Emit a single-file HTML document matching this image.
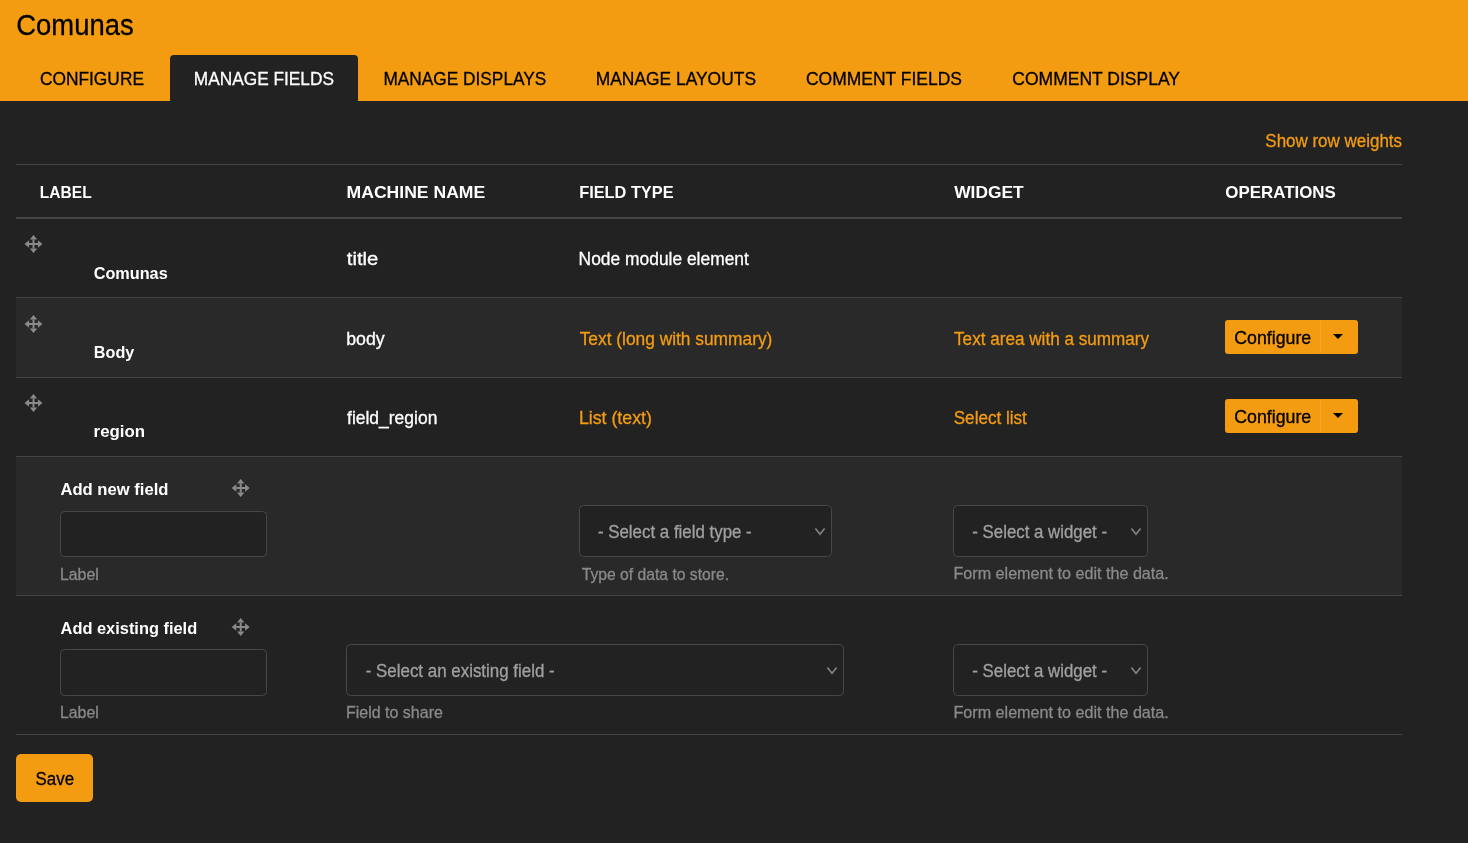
<!DOCTYPE html>
<html><head><meta charset="utf-8"><style>
html,body{margin:0;padding:0;background:#222222;width:1468px;height:843px;overflow:hidden}
svg{display:block;will-change:transform;font-family:"Liberation Sans",sans-serif}
</style></head><body>
<svg width="1468" height="843" viewBox="0 0 1468 843">

<rect width="1468" height="843" fill="#222222"/>
<rect x="0" y="0" width="1468" height="101" fill="#F39C12"/>
<path d="M170 101 V59 a4 4 0 0 1 4 -4 H354 a4 4 0 0 1 4 4 V101 Z" fill="#222222"/>
<rect x="16" y="298" width="1386" height="79" fill="#292929"/>
<rect x="16" y="457" width="1386" height="138" fill="#292929"/>
<rect x="16" y="164" width="1386" height="1" fill="#444444"/>
<rect x="16" y="217" width="1386" height="2" fill="#444444"/>
<rect x="16" y="297" width="1386" height="1" fill="#444444"/>
<rect x="16" y="377" width="1386" height="1" fill="#444444"/>
<rect x="16" y="456" width="1386" height="1" fill="#444444"/>
<rect x="16" y="595" width="1386" height="1" fill="#444444"/>
<rect x="16" y="734" width="1386" height="1" fill="#444444"/>
<g transform="translate(24.5 235.0)" fill="#8a8a8a"><path d="M9 0 L12.7 4.6 H5.3 Z M9 18 L12.7 13.4 H5.3 Z M0 9 L4.6 5.3 V12.7 Z M18 9 L13.4 5.3 V12.7 Z"/><rect x="8" y="4.5" width="2" height="9"/><rect x="4.5" y="8" width="9" height="2"/></g>
<g transform="translate(24.5 315.0)" fill="#8a8a8a"><path d="M9 0 L12.7 4.6 H5.3 Z M9 18 L12.7 13.4 H5.3 Z M0 9 L4.6 5.3 V12.7 Z M18 9 L13.4 5.3 V12.7 Z"/><rect x="8" y="4.5" width="2" height="9"/><rect x="4.5" y="8" width="9" height="2"/></g>
<g transform="translate(24.5 394.0)" fill="#8a8a8a"><path d="M9 0 L12.7 4.6 H5.3 Z M9 18 L12.7 13.4 H5.3 Z M0 9 L4.6 5.3 V12.7 Z M18 9 L13.4 5.3 V12.7 Z"/><rect x="8" y="4.5" width="2" height="9"/><rect x="4.5" y="8" width="9" height="2"/></g>
<g transform="translate(231.7 479.0)" fill="#8a8a8a"><path d="M9 0 L12.7 4.6 H5.3 Z M9 18 L12.7 13.4 H5.3 Z M0 9 L4.6 5.3 V12.7 Z M18 9 L13.4 5.3 V12.7 Z"/><rect x="8" y="4.5" width="2" height="9"/><rect x="4.5" y="8" width="9" height="2"/></g>
<g transform="translate(231.7 618.0)" fill="#8a8a8a"><path d="M9 0 L12.7 4.6 H5.3 Z M9 18 L12.7 13.4 H5.3 Z M0 9 L4.6 5.3 V12.7 Z M18 9 L13.4 5.3 V12.7 Z"/><rect x="8" y="4.5" width="2" height="9"/><rect x="4.5" y="8" width="9" height="2"/></g>
<rect x="1225" y="320" width="133" height="34" fill="#F39C12" rx="3"/>
<rect x="1320" y="321" width="1" height="32" fill="#f5a82e"/>
<path d="M1333 334 h10 l-5 5 z" fill="#000"/>
<rect x="1225" y="399" width="133" height="34" fill="#F39C12" rx="3"/>
<rect x="1320" y="400" width="1" height="32" fill="#f5a82e"/>
<path d="M1333 413 h10 l-5 5 z" fill="#000"/>
<rect x="60.5" y="511.5" width="206" height="45" fill="#222222" rx="4" stroke="#474747" stroke-width="1"/>
<rect x="60.5" y="649.5" width="206" height="46" fill="#222222" rx="4" stroke="#474747" stroke-width="1"/>
<rect x="579.5" y="505.5" width="252" height="51" fill="#222222" rx="4" stroke="#474747" stroke-width="1"/>
<path d="M815.4 528.6 l4.6 5.6 l4.6 -5.6" fill="none" stroke="#858585" stroke-width="1.6"/>
<rect x="953.5" y="505.5" width="194" height="51" fill="#222222" rx="4" stroke="#474747" stroke-width="1"/>
<path d="M1131.4 528.6 l4.6 5.6 l4.6 -5.6" fill="none" stroke="#858585" stroke-width="1.6"/>
<rect x="346.5" y="644.5" width="497" height="51" fill="#222222" rx="4" stroke="#474747" stroke-width="1"/>
<path d="M827.4 667.6 l4.6 5.6 l4.6 -5.6" fill="none" stroke="#858585" stroke-width="1.6"/>
<rect x="953.5" y="644.5" width="194" height="51" fill="#222222" rx="4" stroke="#474747" stroke-width="1"/>
<path d="M1131.4 667.6 l4.6 5.6 l4.6 -5.6" fill="none" stroke="#858585" stroke-width="1.6"/>
<rect x="16" y="754" width="77" height="48" fill="#F39C12" rx="5"/>
<text transform="translate(16.23 34.70) scale(0.9045 1)" font-size="30.38" letter-spacing="0.000" fill="#000000" stroke="#000000" stroke-width="0.3">Comunas</text>
<text transform="translate(39.93 84.60) scale(0.9474 1)" font-size="18.31" letter-spacing="0.000" fill="#000000" stroke="#000000" stroke-width="0.3">CONFIGURE</text>
<text transform="translate(193.82 84.60) scale(0.9437 1)" font-size="18.31" letter-spacing="0.000" fill="#ffffff" stroke="#ffffff" stroke-width="0.3">MANAGE FIELDS</text>
<text transform="translate(383.42 84.60) scale(0.9435 1)" font-size="18.31" letter-spacing="0.000" fill="#000000" stroke="#000000" stroke-width="0.3">MANAGE DISPLAYS</text>
<text transform="translate(595.71 84.60) scale(0.9516 1)" font-size="18.31" letter-spacing="0.000" fill="#000000" stroke="#000000" stroke-width="0.3">MANAGE LAYOUTS</text>
<text transform="translate(805.93 84.60) scale(0.9555 1)" font-size="18.31" letter-spacing="0.000" fill="#000000" stroke="#000000" stroke-width="0.3">COMMENT FIELDS</text>
<text transform="translate(1012.32 84.60) scale(0.9572 1)" font-size="18.31" letter-spacing="0.000" fill="#000000" stroke="#000000" stroke-width="0.3">COMMENT DISPLAY</text>
<text transform="translate(1265.32 146.90) scale(0.9661 1)" font-size="17.58" letter-spacing="0.000" fill="#F39C12" stroke="#F39C12" stroke-width="0.3">Show row weights</text>
<text transform="translate(39.86 198.00) scale(0.9089 1)" font-size="17.15" letter-spacing="0.000" fill="#ffffff" font-weight="bold">LABEL</text>
<text transform="translate(346.54 198.00) scale(1.0259 1)" font-size="17.15" letter-spacing="0.000" fill="#ffffff" font-weight="bold">MACHINE NAME</text>
<text transform="translate(579.22 198.00) scale(0.9524 1)" font-size="17.15" letter-spacing="0.000" fill="#ffffff" font-weight="bold">FIELD TYPE</text>
<text transform="translate(954.20 198.00) scale(1.0134 1)" font-size="17.15" letter-spacing="0.000" fill="#ffffff" font-weight="bold">WIDGET</text>
<text transform="translate(1225.32 197.90) scale(0.9864 1)" font-size="17.15" letter-spacing="0.000" fill="#ffffff" font-weight="bold">OPERATIONS</text>
<text transform="translate(93.65 278.80) scale(0.9559 1)" font-size="17.02" letter-spacing="0.000" fill="#ffffff" font-weight="bold">Comunas</text>
<text transform="translate(346.80 265.00) scale(1.1526 1)" font-size="17.58" letter-spacing="-0.000" fill="#ffffff" stroke="#ffffff" stroke-width="0.3">title</text>
<text transform="translate(578.61 265.00) scale(0.9904 1)" font-size="17.58" letter-spacing="0.000" fill="#ffffff" stroke="#ffffff" stroke-width="0.3">Node module element</text>
<text transform="translate(93.83 357.70) scale(0.9519 1)" font-size="17.02" letter-spacing="0.000" fill="#ffffff" font-weight="bold">Body</text>
<text transform="translate(346.13 344.80) scale(1.0116 1)" font-size="17.58" letter-spacing="0.000" fill="#ffffff" stroke="#ffffff" stroke-width="0.3">body</text>
<text transform="translate(579.65 345.00) scale(0.9870 1)" font-size="17.58" letter-spacing="0.000" fill="#F39C12" stroke="#F39C12" stroke-width="0.3">Text (long with summary)</text>
<text transform="translate(954.06 344.80) scale(0.9742 1)" font-size="17.58" letter-spacing="0.000" fill="#F39C12" stroke="#F39C12" stroke-width="0.3">Text area with a summary</text>
<text transform="translate(1234.21 343.70) scale(1.0105 1)" font-size="17.58" letter-spacing="0.000" fill="#000000" stroke="#000000" stroke-width="0.3">Configure</text>
<text transform="translate(93.59 437.20) scale(0.9888 1)" font-size="17.02" letter-spacing="0.000" fill="#ffffff" font-weight="bold">region</text>
<text transform="translate(347.03 423.70) scale(0.9951 1)" font-size="17.58" letter-spacing="0.000" fill="#ffffff" stroke="#ffffff" stroke-width="0.3">field_region</text>
<text transform="translate(578.88 423.70) scale(1.0107 1)" font-size="17.58" letter-spacing="0.000" fill="#F39C12" stroke="#F39C12" stroke-width="0.3">List (text)</text>
<text transform="translate(953.72 423.90) scale(0.9736 1)" font-size="17.58" letter-spacing="0.000" fill="#F39C12" stroke="#F39C12" stroke-width="0.3">Select list</text>
<text transform="translate(1234.21 422.70) scale(1.0105 1)" font-size="17.58" letter-spacing="0.000" fill="#000000" stroke="#000000" stroke-width="0.3">Configure</text>
<text transform="translate(60.47 495.00) scale(0.9764 1)" font-size="17.02" letter-spacing="0.000" fill="#ffffff" font-weight="bold">Add new field</text>
<text transform="translate(597.92 538.00) scale(0.9609 1)" font-size="17.58" letter-spacing="0.000" fill="#a0a0a0" stroke="#a0a0a0" stroke-width="0.3">- Select a field type -</text>
<text transform="translate(972.33 537.60) scale(0.9580 1)" font-size="17.58" letter-spacing="0.000" fill="#a0a0a0" stroke="#a0a0a0" stroke-width="0.3">- Select a widget -</text>
<text transform="translate(59.93 579.70) scale(0.9253 1)" font-size="17.16" letter-spacing="0.000" fill="#8a8a8a" stroke="#8a8a8a" stroke-width="0.3">Label</text>
<text transform="translate(581.69 579.50) scale(0.9147 1)" font-size="17.16" letter-spacing="0.000" fill="#8a8a8a" stroke="#8a8a8a" stroke-width="0.3">Type of data to store.</text>
<text transform="translate(953.41 579.10) scale(0.9413 1)" font-size="17.16" letter-spacing="0.000" fill="#8a8a8a" stroke="#8a8a8a" stroke-width="0.3">Form element to edit the data.</text>
<text transform="translate(60.57 634.00) scale(0.9637 1)" font-size="17.02" letter-spacing="0.000" fill="#ffffff" font-weight="bold">Add existing field</text>
<text transform="translate(365.72 676.90) scale(0.9622 1)" font-size="17.58" letter-spacing="0.000" fill="#a0a0a0" stroke="#a0a0a0" stroke-width="0.3">- Select an existing field -</text>
<text transform="translate(972.33 676.60) scale(0.9580 1)" font-size="17.58" letter-spacing="0.000" fill="#a0a0a0" stroke="#a0a0a0" stroke-width="0.3">- Select a widget -</text>
<text transform="translate(59.93 717.80) scale(0.9253 1)" font-size="17.16" letter-spacing="0.000" fill="#8a8a8a" stroke="#8a8a8a" stroke-width="0.3">Label</text>
<text transform="translate(346.02 717.50) scale(0.9315 1)" font-size="17.16" letter-spacing="0.000" fill="#8a8a8a" stroke="#8a8a8a" stroke-width="0.3">Field to share</text>
<text transform="translate(953.41 718.00) scale(0.9413 1)" font-size="17.16" letter-spacing="0.000" fill="#8a8a8a" stroke="#8a8a8a" stroke-width="0.3">Form element to edit the data.</text>
<text transform="translate(35.62 784.50) scale(0.9030 1)" font-size="18.70" letter-spacing="0.000" fill="#000000" stroke="#000000" stroke-width="0.3">Save</text>
</svg></body></html>
